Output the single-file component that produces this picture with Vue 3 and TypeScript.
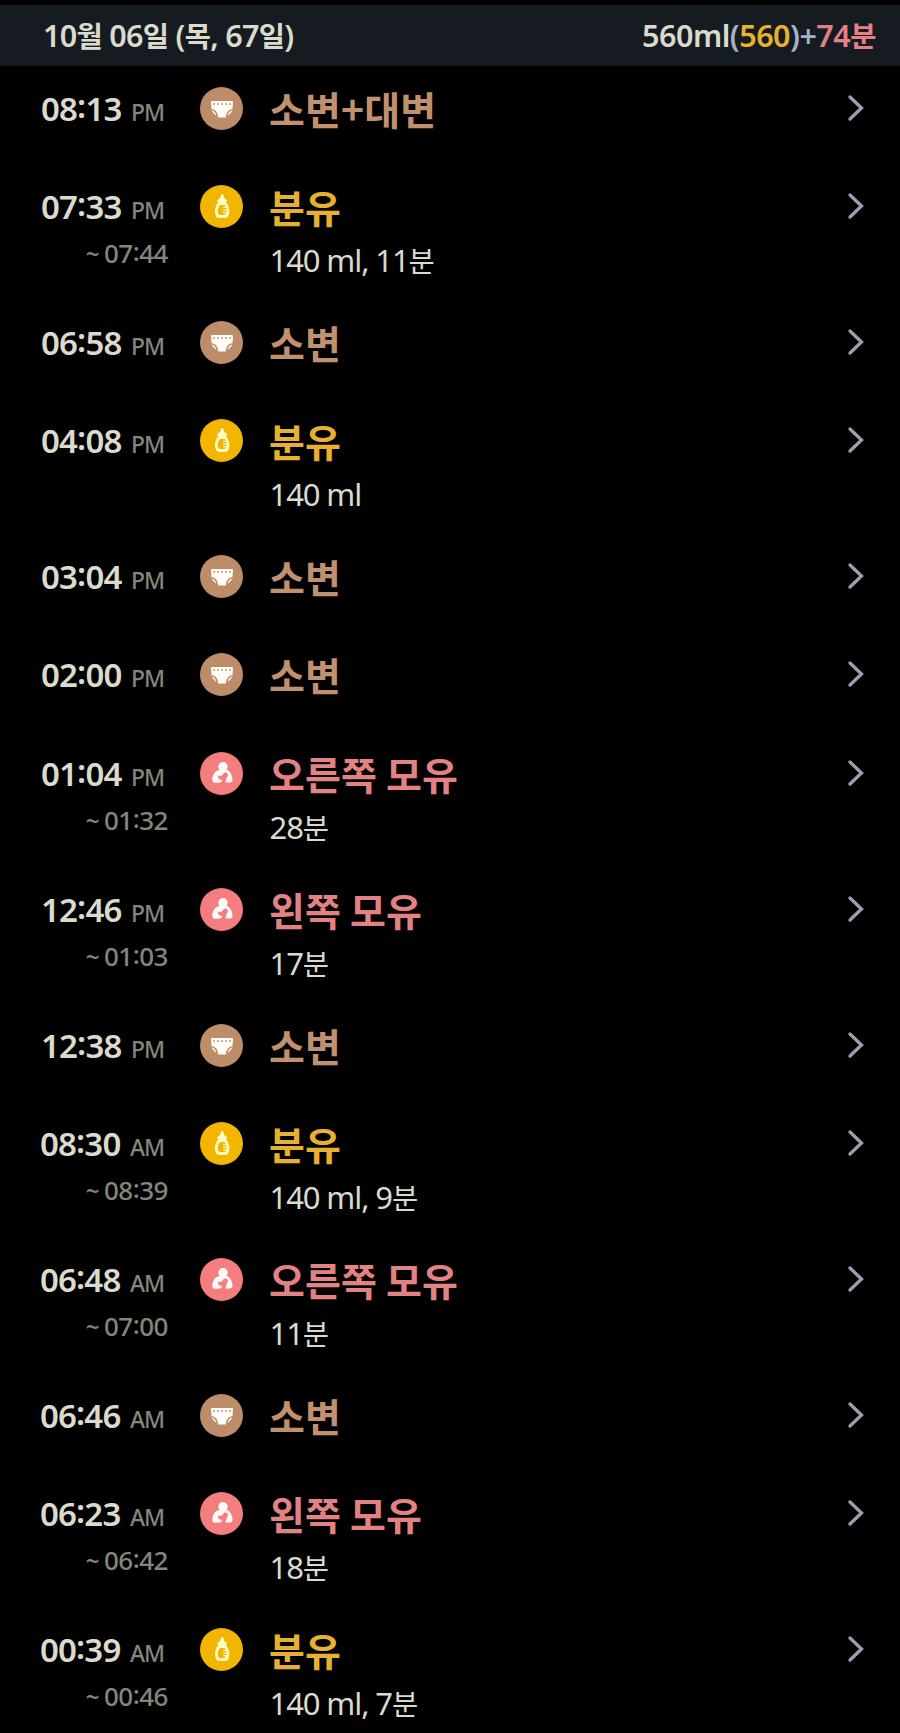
<script setup lang="ts">
type Kind = 'diaper' | 'bottle' | 'nursing'

interface Entry {
  time: string
  half: 'AM' | 'PM'
  kind: Kind
  title: string
  until?: string
  detail?: string
}

interface Run {
  text: string
  hangul: boolean
}

const entries: Entry[] = [
  { time: '08:13', half: 'PM', kind: 'diaper', title: '소변+대변' },
  { time: '07:33', half: 'PM', kind: 'bottle', title: '분유', until: '07:44', detail: '140 ml, 11분' },
  { time: '06:58', half: 'PM', kind: 'diaper', title: '소변' },
  { time: '04:08', half: 'PM', kind: 'bottle', title: '분유', detail: '140 ml' },
  { time: '03:04', half: 'PM', kind: 'diaper', title: '소변' },
  { time: '02:00', half: 'PM', kind: 'diaper', title: '소변' },
  { time: '01:04', half: 'PM', kind: 'nursing', title: '오른쪽 모유', until: '01:32', detail: '28분' },
  { time: '12:46', half: 'PM', kind: 'nursing', title: '왼쪽 모유', until: '01:03', detail: '17분' },
  { time: '12:38', half: 'PM', kind: 'diaper', title: '소변' },
  { time: '08:30', half: 'AM', kind: 'bottle', title: '분유', until: '08:39', detail: '140 ml, 9분' },
  { time: '06:48', half: 'AM', kind: 'nursing', title: '오른쪽 모유', until: '07:00', detail: '11분' },
  { time: '06:46', half: 'AM', kind: 'diaper', title: '소변' },
  { time: '06:23', half: 'AM', kind: 'nursing', title: '왼쪽 모유', until: '06:42', detail: '18분' },
  { time: '00:39', half: 'AM', kind: 'bottle', title: '분유', until: '00:46', detail: '140 ml, 7분' },
]

// Splits a string so that Hangul and Latin runs can be sized separately.
function runs(text: string): Run[] {
  return (text.match(/[가-힣]+|[^가-힣]+/g) ?? []).map((part) => ({
    text: part,
    hangul: /[가-힣]/.test(part),
  }))
}
</script>

<template>
  <main class="log">
    <header class="day">
      <div class="date">
        <span v-for="(r, i) in runs('10월 06일 (목, 67일)')" :key="i" :class="{ ko: r.hangul }">{{ r.text }}</span>
      </div>
      <div class="total"><span>560ml</span><span class="mark">(</span><span class="formula">560</span><span class="mark">)+</span><span class="breast">74<span class="ko">분</span></span></div>
    </header>
    <ul class="entries">
      <li v-for="(e, i) in entries" :key="i" class="entry" :class="[e.kind, { tall: e.detail }]">
        <div class="when">
          <div class="start"><span class="clock">{{ e.time.slice(0, 2) }}<span class="colon">:</span>{{ e.time.slice(3) }}</span><span class="half">{{ e.half }}</span></div>
          <div v-if="e.until" class="until"><span class="tilde">~</span>{{ e.until.slice(0, 2) }}<span class="colon">:</span>{{ e.until.slice(3) }}</div>
        </div>
        <svg class="icon" viewBox="0 0 43 43">
          <circle class="disc" cx="21.5" cy="21.5" r="21.5" />
          <template v-if="e.kind === 'diaper'">
            <path class="fill" d="M12 14h20q1 0 1 1l-.6 8q-.4 1.800-2 3.200-1.700 2-3.400 3.200-1.200 1.200-2.600 1.200h-4.800q-1.400 0-2.600-1.200-1.700-1.200-3.400-3.200-1.600-1.400-2-3.200L11 15q0-1 1-1z" />
            <path class="gap" d="M11.300 22.800q5.300.6 6.200 7.400M32.700 22.800q-5.300.6-6.200 7.400" />
            <path class="dash" d="M13.200 16.900h18" />
          </template>
          <g v-else-if="e.kind === 'bottle'" transform="translate(1.700 1.300) scale(.93 .96)">
            <path class="fill" d="M22 8q1.500 0 1.700 2l.5 2.300q2.600 1.200 3 2.800.1 1.200-1 1.700 3.500 3.400 3.500 9.200 0 3.800-1.500 5.600-1.200 1.400-3.400 1.400h-5.600q-2.200 0-3.400-1.400-1.500-1.800-1.500-5.600 0-5.800 3.500-9.200-1.100-.5-1-1.700.4-1.600 3-2.800l.5-2.300Q20.500 8 22 8z" />
            <path class="milk" d="M20 19.600h4.800q1.700 2 2 5.200.3 3-1 4.400-.8.800-2 .8h-3.600q-1.200 0-2-.8-1.300-1.400-.9-4.600.4-3.200 2.700-5z" />
            <path class="tick" d="M28 21.900h-5M28 24.800h-5M28 27.600h-5" />
          </g>
          <template v-else>
            <circle class="fill" cx="23" cy="14.700" r="4.700" />
            <path class="fill" d="M19.500 17.500h7q4.500 2 5.700 7.500.8 3.200-.2 4.600-1 1.200-3 1l-3-.2q-1.600-.4-1.200-2.400l-3 .2q.4 2-1.500 2.300l-5.300.3q-2.400 0-2.700-2.600-.3-4.400 2.900-8.200 1-1.300 2.500-1.300z" />
            <path class="baby" d="M18.300 23.200l1.800 1q1.500-.7 2.700-1.500.5-2.200 2.500-2.200 2.600.2 2.600 2.800 0 1.500-1.100 2.300l-.7 2.400q-.6 2.300-1.300 2.700h-3.300q1-1.200 1.300-2.600l-2-.3q-2.300-.4-2.800-2.200z" />
          </template>
        </svg>
        <div class="what">
          <div class="title">{{ e.title }}</div>
          <div v-if="e.detail" class="detail">
            <span v-for="(r, j) in runs(e.detail)" :key="j" :class="{ ko: r.hangul }">{{ r.text }}</span>
          </div>
        </div>
        <svg class="chevron" viewBox="0 0 18 28"><path d="M3 3l11.500 11L3 25" /></svg>
      </li>
    </ul>
  </main>
</template>

<style>
body {
  margin: 0;
  background: #000;
}
</style>

<style scoped>
.log {
  box-sizing: border-box;
  width: 900px;
  height: 1733px;
  padding-top: 5px;
  overflow: hidden;
  background: #000;
  color: #dadacd;
  font-family: 'Noto Sans', 'Noto Sans CJK KR', sans-serif;
  white-space: pre;
}
.day {
  display: flex;
  justify-content: space-between;
  box-sizing: border-box;
  height: 61px;
  padding: 0 24px 0 43px;
  background: #161b22;
  font-size: 30.5px;
  font-weight: 600;
  line-height: 60px;
  letter-spacing: -0.700px;
}
.total {
  letter-spacing: -0.500px;
}
.ko {
  font-family: 'Noto Sans CJK KR', sans-serif;
}
.day .ko {
  font-size: 28.500px;
  font-weight: 700;
  line-height: 1;
}
.mark {
  color: #a5b1cb;
}
.formula {
  color: #e6b32e;
}
.breast {
  color: #e58184;
}
.entries {
  margin: 0;
  padding: 0;
  list-style: none;
}
.entry {
  display: flex;
  height: 98.200px;
}
.entry.tall {
  height: 135.950px;
}
.when {
  width: 168px;
  padding-top: 20px;
}
.start {
  display: flex;
  justify-content: flex-end;
  align-items: baseline;
  height: 47px;
  padding-right: 4px;
  line-height: 46px;
}
.clock {
  font-size: 33px;
  font-weight: 600;
  letter-spacing: -0.800px;
}
.colon {
  line-height: 1;
  vertical-align: 3px;
}
.half {
  margin-left: 9.500px;
  color: #84857b;
  font-size: 23px;
  font-weight: 500;
  letter-spacing: -1.100px;
}
.until {
  height: 44px;
  color: #84857b;
  font-size: 26px;
  font-weight: 500;
  line-height: 44px;
  letter-spacing: -0.500px;
  text-align: right;
}
.until .colon {
  vertical-align: 2px;
}
.tilde {
  margin-right: 5px;
  font-size: 24px;
  font-weight: 600;
}
.icon {
  width: 43px;
  height: 43px;
  margin: 21px 26px 0 32px;
}
.diaper { --tone: #bd8c69; --ink: #c1906e; --glyph: #fffdf8; }
.bottle { --tone: #f2b500; --ink: #e6b030; --glyph: #fffbc4; }
.nursing { --tone: #f47d7e; --ink: #e38282; --glyph: #fffafa; }
.disc,
.milk,
.baby {
  fill: var(--tone);
}
.fill {
  fill: var(--glyph);
}
.gap,
.dash,
.tick {
  fill: none;
  stroke: var(--tone);
  stroke-width: 1.500;
}
.dash {
  stroke-dasharray: 1.800 2.200;
}
.tick {
  stroke: var(--glyph);
  stroke-width: 1.300;
}
.what {
  flex: 1;
  padding-top: 13px;
}
.title {
  height: 60px;
  color: var(--ink);
  font-family: 'Noto Sans CJK KR', sans-serif;
  font-size: 39px;
  font-weight: 700;
  line-height: 58px;
  letter-spacing: 0.150px;
}
.detail {
  height: 48px;
  padding-left: 0.500px;
  font-size: 31px;
  font-weight: 400;
  line-height: 47px;
  letter-spacing: -1.100px;
}
.detail .ko {
  font-size: 28.500px;
  font-weight: 400;
  line-height: 1;
}
.chevron {
  width: 18px;
  height: 28px;
  margin: 28px 35.500px 0 0;
}
.chevron path {
  fill: none;
  stroke: #9b9fb4;
  stroke-width: 3.300;
  stroke-linecap: round;
}
</style>
